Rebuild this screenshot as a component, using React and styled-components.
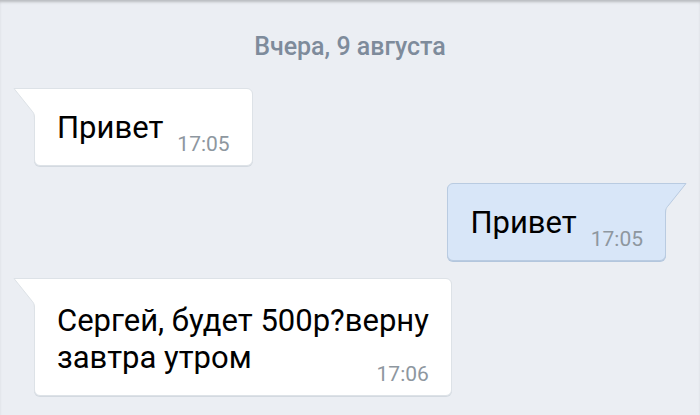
import React from 'react';
import styled, { createGlobalStyle } from 'styled-components';

const GlobalStyle = createGlobalStyle`
  html, body {
    margin: 0;
    padding: 0;
    background: #ebeef3;
    font-family: Roboto, "Noto Sans", sans-serif;
  }
`;

const Page = styled.div`
  height: 415px;
  overflow: hidden;
  background: #ebeef3;
  box-shadow: inset 0 3px 3px -1px rgba(0, 0, 0, 0.22);
  display: flex;
  flex-direction: column;
  gap: 17px;
  padding: 31px 34px 0;
  box-sizing: border-box;
`;

const DateLabel = styled.div`
  text-align: center;
  color: #7e8b9b;
  font-size: 25px;
  font-weight: 500;
  line-height: 32px;
  margin-bottom: 8px;
`;

const Row = styled.div`
  display: flex;
  justify-content: ${(p) => (p.$out ? 'flex-end' : 'flex-start')};
`;

const Bubble = styled.div`
  position: relative;
  display: flow-root;
  padding: ${(p) => (p.$multiline ? '23px' : '20px')} 22px 9px 22px;
  background: ${(p) => (p.$out ? '#d8e6f8' : '#ffffff')};
  border: 1px solid ${(p) => (p.$out ? '#b9cbe1' : '#dde2e7')};
  box-shadow: 0 1px 0 ${(p) => (p.$out ? '#b3c6dd' : '#d3d9e0')};
  border-radius: ${(p) => (p.$out ? '6px 0 6px 6px' : '0 6px 6px 6px')};
  color: #000;
  font-size: 31px;
  line-height: 37px;
  white-space: pre-line;
`;

const Time = styled.span`
  float: right;
  margin: 23px 0 0 14px;
  color: #8e979f;
  font-size: 21px;
  line-height: 24px;
  white-space: nowrap;
`;

const TailSvg = styled.svg`
  position: absolute;
  top: -1px;
  ${(p) => (p.$out ? 'right: -22px; transform: scaleX(-1);' : 'left: -22px;')}
  width: 24px;
  height: 32px;
  overflow: visible;
`;

function Tail({ out }) {
  const fill = out ? '#d8e6f8' : '#ffffff';
  const stroke = out ? '#b9cbe1' : '#dde2e7';
  return (
    <TailSvg $out={out} viewBox="0 0 24 32">
      <path d="M1 0 H24 V32 H22 C22 27 21 25 19 23 L1 0.5 Z" fill={fill} />
      <path
        d="M24 0.5 H1 L19 23 C21 25 21.5 27 21.5 32"
        fill="none"
        stroke={stroke}
        strokeWidth="1"
      />
    </TailSvg>
  );
}

const messages = [
  { out: false, text: 'Привет', time: '17:05' },
  { out: true, text: 'Привет', time: '17:05' },
  { out: false, text: 'Сергей, будет 500р?верну\nзавтра утром', time: '17:06' },
];

export default function App() {
  return (
    <>
      <GlobalStyle />
      <Page>
        <DateLabel>Вчера, 9 августа</DateLabel>
        {messages.map((m, i) => (
          <Row key={i} $out={m.out}>
            <Bubble $out={m.out} $multiline={m.text.includes('\n')}>
              <Tail out={m.out} />
              {m.text}
              <Time>{m.time}</Time>
            </Bubble>
          </Row>
        ))}
      </Page>
    </>
  );
}
